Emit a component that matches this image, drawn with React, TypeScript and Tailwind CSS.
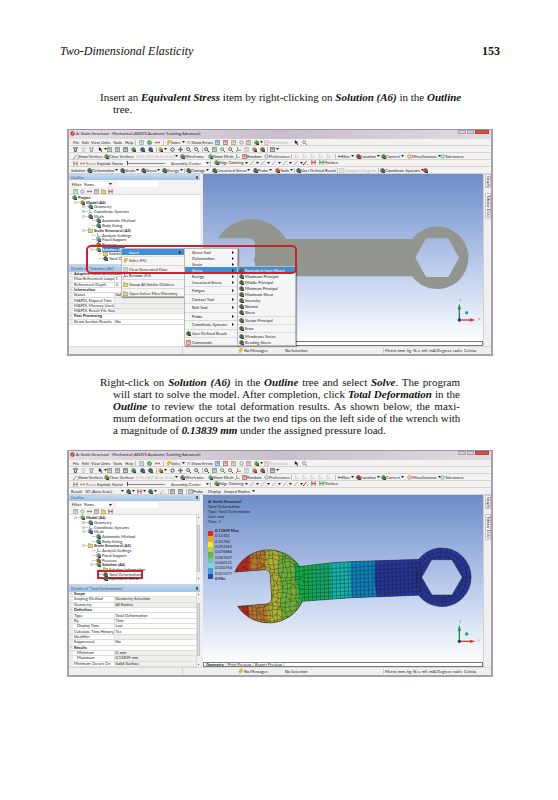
import React from "react";

type IconKind = "cube" | "page" | "check" | "bolt" | "zoom" | "move" | "funnel" | "folder" | "line" | "cursor" | "axis" | "bars" | "ring" | "size";

function Icon({ kind, c = "#3c5a46" }: { kind: IconKind; c?: string }) {
  return (
    <svg viewBox="0 0 12 12" className="size-[5px] shrink-0" aria-hidden="true">
      {kind === "cube" && (
        <>
          <path d="M1 3 6 0l5 3v6l-5 3-5-3z" fill={c} />
          <path d="M1 3l5 3 5-3M6 6v6" stroke="#fff" strokeOpacity="0.5" fill="none" />
          <path d="M6 6h6v6H6z" fill="#26333c" />
          <path d="M8 8h3" stroke="#e4c840" strokeWidth="2" />
        </>
      )}
      {kind === "page" && <path d="M1 1h10v10H1zM3 4h6M3 7h6" fill="#f4f6f6" stroke={c} strokeWidth="1.6" />}
      {kind === "check" && (
        <>
          <circle cx="6" cy="6" r="5.5" fill={c} />
          <path d="m3 6 2 2 4-5" stroke="#fff" strokeWidth="1.8" fill="none" />
        </>
      )}
      {kind === "bolt" && <path d="M6 0h5L8 5h3l-7 7 1-5H2z" fill="#f5cf17" stroke="#8b7410" strokeWidth="0.8" />}
      {kind === "zoom" && (
        <>
          <circle cx="5" cy="5" r="3.6" fill="#eef" stroke={c} strokeWidth="1.8" />
          <path d="m8 8 4 4" stroke={c} strokeWidth="2.4" />
        </>
      )}
      {kind === "move" && <path d="M6 1v10M1 6h10M4 3l2-2 2 2M4 9l2 2 2-2M3 4 1 6l2 2M9 4l2 2-2 2" stroke={c} strokeWidth="1.5" fill="none" />}
      {kind === "funnel" && <path d="M1 2h10L8 6v5H4V6z" fill="none" stroke={c} strokeWidth="1.8" />}
      {kind === "folder" && <path d="M0 2h5l1 2h6v7H0z" fill="#ecd66c" stroke="#6c8a3a" strokeWidth="1.4" />}
      {kind === "line" && <path d="M1 11 9 2M3 11H0M10 11h2" stroke={c} strokeWidth="1.5" fill="none" />}
      {kind === "cursor" && <path d="M2 0v9l3-2 3 5 2-1-3-5h3z" fill={c} />}
      {kind === "axis" && <path d="M4 0v8h8M4 8l-4 4" stroke={c} strokeWidth="1.6" fill="none" />}
      {kind === "bars" && <path d="M2 0v12M10 0v12M2 6h8M4 4 2 6l2 2M8 4l2 2-2 2" stroke={c} strokeWidth="1.7" fill="none" />}
      {kind === "ring" && <circle cx="6" cy="6" r="4" fill="none" stroke={c} strokeWidth="2" />}
      {kind === "size" && <path d="M0 6h12M3 3 0 6l3 3M9 3l3 3-3 3" stroke={c} strokeWidth="1.5" fill="none" />}
    </svg>
  );
}

type Item = { w: string; t?: string; i?: IconKind; c?: string; drop?: boolean; off?: boolean; sep?: boolean };

function Toolbar({ items, pad }: { items: Item[]; pad: string }) {
  return (
    <div className={"flex h-[7px] items-center border-b border-[#d3d3d3] bg-[#f3f2f1] " + pad}>
      {items.map((it, n) =>
        it.sep ? (
          <span key={n} className={"flex h-[5px] shrink-0 " + it.w}>
            <i className="h-full w-px bg-[#bdbdbd]" />
          </span>
        ) : it.t || it.i ? (
          <button key={n} type="button" aria-label={it.t ?? it.i} className={"flex shrink-0 items-center whitespace-nowrap text-left " + it.w + (it.off ? " text-[#b3b3b3]" : "")}>
            {it.i && <Icon kind={it.i} c={it.c} />}
            {it.t && <span>{it.t}</span>}
            {it.drop && <Caret />}
          </button>
        ) : (
          <span key={n} className={"flex shrink-0 items-center " + it.w}>
            {it.drop && <Caret />}
          </span>
        ),
      )}
    </div>
  );
}

function Caret() {
  return (
    <svg viewBox="0 0 6 4" className="ml-px h-[2px] w-[3px] shrink-0" aria-hidden="true">
      <path d="M0 0h6L3 4z" fill="#222" />
    </svg>
  );
}

const menuRow: Item[] = [
  { w: "w-[9px]", t: "File" },
  { w: "w-[9px]", t: "Edit" },
  { w: "w-[10px]", t: "View" },
  { w: "w-[12px]", t: "Units" },
  { w: "w-[12px]", t: "Tools" },
  { w: "w-[10px]", t: "Help" },
  { w: "w-[4px]", sep: true },
  { w: "w-[8px]", i: "page", c: "#73a07c" },
  { w: "w-[8px]", i: "check", c: "#2fa12d" },
  { w: "w-[8px]", i: "size", c: "#a03a52" },
  { w: "w-[3px]", sep: true },
  { w: "w-[21px]", i: "bolt", t: "Solve", drop: true },
  { w: "w-[28px]", t: "?/ Show Errors" },
  { w: "w-[8px]", i: "page", c: "#3b62a0" },
  { w: "w-[8px]", i: "page", c: "#a83b31" },
  { w: "w-[8px]", i: "page", c: "#8c8c4a" },
  { w: "w-[7px]", i: "ring", c: "#888888" },
  { w: "w-[8px]", i: "page", c: "#9c6a5b" },
  { w: "w-[10px]", i: "cube", c: "#49a454", drop: true },
  { w: "w-[30px]", i: "page", c: "#c4a9a0", t: "Worksheet", off: true },
  { w: "w-[8px]", i: "cursor", c: "#222222" },
  { w: "w-[8px]", i: "zoom", c: "#6a8a8a" },
];

const viewRow: Item[] = [
  { w: "w-[8px]", i: "funnel", c: "#222222" },
  { w: "w-[8px]", i: "funnel", c: "#b9b9b9" },
  { w: "w-[9px]", i: "funnel", c: "#777777" },
  { w: "w-[9px]", i: "cursor", c: "#222222", drop: true },
  { w: "w-[8px]", i: "page", c: "#4c6f52" },
  { w: "w-[8px]", i: "page", c: "#4c6f52" },
  { w: "w-[8px]", i: "page", c: "#444444" },
  { w: "w-[9px]", i: "cube", c: "#39a045" },
  { w: "w-[8px]", i: "cube", c: "#3a4b90" },
  { w: "w-[8px]", i: "cube", c: "#3a4b90" },
  { w: "w-[2px]", sep: true },
  { w: "w-[12px]", i: "cube", c: "#df9d34", drop: true },
  { w: "w-[8px]", i: "ring", c: "#333333" },
  { w: "w-[8px]", i: "move", c: "#333333" },
  { w: "w-[8px]", i: "zoom", c: "#444444" },
  { w: "w-[8px]", i: "zoom", c: "#444444" },
  { w: "w-[2px]", sep: true },
  { w: "w-[8px]", i: "zoom", c: "#333333" },
  { w: "w-[8px]", i: "page", c: "#467a48" },
  { w: "w-[8px]", i: "zoom", c: "#278a34" },
  { w: "w-[8px]", i: "zoom", c: "#555555" },
  { w: "w-[8px]", i: "axis", c: "#555555" },
  { w: "w-[8px]", i: "page", c: "#aaaaaa" },
  { w: "w-[8px]", i: "cube", c: "#b58d30" },
  { w: "w-[7px]", i: "cube", c: "#8f4d38" },
  { w: "w-[3px]", sep: true },
  { w: "w-[10px]", i: "page", c: "#444444", drop: true },
];

const meshRow: Item[] = [
  { w: "w-[31px]", i: "line", c: "#555555", t: "Show Vertices" },
  { w: "w-[32px]", i: "cube", c: "#74843b", t: "Close Vertices" },
  { w: "w-[38px]", t: "0.64+002 (Auto Scale)", off: true },
  { w: "w-[6px]", drop: true },
  { w: "w-[28px]", i: "cube", c: "#6a6a6a", t: "Wireframe" },
  { w: "w-[27px]", i: "cube", c: "#7a9a88", t: "Show Mesh" },
  { w: "w-[7px]", i: "axis", c: "#3d9a4c" },
  { w: "w-[22px]", i: "page", c: "#b02d25", t: "Random" },
  { w: "w-[27px]", i: "ring", c: "#6f8aa8", t: "Preferences" },
  { w: "w-[3px]", sep: true },
  { w: "w-[8px]", i: "axis", c: "#bbbbbb" },
  { w: "w-[8px]", i: "axis", c: "#bbbbbb" },
  { w: "w-[8px]", i: "axis", c: "#bbbbbb" },
  { w: "w-[8px]", i: "axis", c: "#bbbbbb" },
  { w: "w-[9px]", i: "axis", c: "#bbbbbb" },
  { w: "w-[3px]", sep: true },
  { w: "w-[18px]", i: "size", c: "#333333", t: "Size", drop: true },
  { w: "w-[25px]", i: "cube", c: "#a12632", t: "Location", drop: true },
  { w: "w-[26px]", i: "cube", c: "#2f8d3d", t: "Convert", drop: true },
  { w: "w-[33px]", i: "ring", c: "#d8574a", t: "Miscellaneous", drop: true },
  { w: "w-[26px]", i: "ring", c: "#419a71", t: "Tolerances" },
];

const edgeRow: Item[] = [
  { w: "w-[36px]", i: "cube", c: "#57a04f", t: "Edge Coloring", drop: true },
  { w: "w-[11px]", i: "line", c: "#888888", drop: true },
  { w: "w-[11px]", i: "line", c: "#888888", drop: true },
  { w: "w-[11px]", i: "line", c: "#888888", drop: true },
  { w: "w-[11px]", i: "line", c: "#888888", drop: true },
  { w: "w-[9px]", i: "line", c: "#888888", drop: true },
  { w: "w-[8px]", i: "line", c: "#000000" },
  { w: "w-[8px]", i: "bars", c: "#a02c3a" },
  { w: "w-[24px]", i: "bars", c: "#2c8a4a", t: "Thicken" },
];

const solutionRow: Item[] = [
  { w: "w-[16px]", t: "Solution" },
  { w: "w-[33px]", i: "cube", t: "Deformation", drop: true },
  { w: "w-[21px]", i: "cube", t: "Strain", drop: true },
  { w: "w-[21px]", i: "cube", t: "Stress", drop: true },
  { w: "w-[22px]", i: "cube", t: "Energy", drop: true },
  { w: "w-[2px]", sep: true },
  { w: "w-[26px]", i: "cube", t: "Damage", drop: true },
  { w: "w-[41px]", i: "cube", t: "Linearized Stress", drop: true },
  { w: "w-[22px]", i: "cube", t: "Probe", drop: true },
  { w: "w-[19px]", i: "cube", c: "#c4532c", t: "Tools", drop: true },
  { w: "w-[2px]", sep: true },
  { w: "w-[41px]", i: "cube", t: "User Defined Result" },
  { w: "w-[2px]", sep: true },
  { w: "w-[39px]", i: "page", c: "#c0c0c0", t: "Campbell Diagram", off: true },
  { w: "w-[2px]", sep: true },
  { w: "w-[43px]", i: "cube", t: "Coordinate Systems", drop: true },
  { w: "w-[6px]", i: "cube", c: "#b33030" },
];

const resultRow: Item[] = [
  { w: "w-[14px]", t: "Result" },
  { w: "w-[35px]", t: "3D (Auto Scale)" },
  { w: "w-[6px]", drop: true },
  { w: "w-[11px]", i: "cube", c: "#2f6b46", drop: true },
  { w: "w-[11px]", i: "bars", c: "#b0412f", drop: true },
  { w: "w-[12px]", i: "cube", c: "#3d6444", drop: true },
  { w: "w-[8px]", i: "line", c: "#9a6a50" },
  { w: "w-[2px]", sep: true },
  { w: "w-[8px]", i: "page", c: "#555555" },
  { w: "w-[8px]", i: "page", c: "#555555" },
  { w: "w-[2px]", sep: true },
  { w: "w-[20px]", i: "page", c: "#777777", t: "Probe" },
  { w: "w-[16px]", t: "Display" },
  { w: "w-[27px]", t: "Scoped Bodies" },
  { w: "w-[6px]", drop: true },
];

function ExplodeRow({ id }: { id: string }) {
  return (
    <div className="flex h-[7px] items-center border-b border-[#d3d3d3] bg-[#f3f2f1] pl-[4px]">
      <span className="w-[7px]">
        <Icon kind="bars" c="#7a7a7a" />
      </span>
      <button type="button" className="flex w-[17px] items-center gap-px whitespace-nowrap text-[#777]">
        <Icon kind="size" c="#b05a5a" />
        Reset
      </button>
      <label htmlFor={id + "-explode"} className="w-[30px] whitespace-nowrap">
        Explode Factor
      </label>
      <input id={id + "-explode"} type="range" defaultValue={0} className="h-px w-[38px] appearance-none bg-[#8b8b8b] [&::-webkit-slider-thumb]:h-[4px] [&::-webkit-slider-thumb]:w-px [&::-webkit-slider-thumb]:appearance-none [&::-webkit-slider-thumb]:bg-[#444]" />
      <select aria-label="Explode center" className="ml-[4px] h-[5px] w-[36px] appearance-none border-0 bg-[#f8f8f8] p-0 pl-[2px]">
        <option>Assembly Center</option>
      </select>
      <span className="w-[5px]">
        <Caret />
      </span>
      <span className="flex h-[5px] w-[4px]">
        <i className="h-full w-px bg-[#bdbdbd]" />
      </span>
      <Toolbar items={edgeRow} pad="pl-0" />
    </div>
  );
}

type Node = { pad: string; t: string; bold?: boolean; exp?: "+" | "-"; i?: IconKind; c?: string; sel?: boolean; boxed?: boolean };

const common: Node[] = [
  { pad: "pl-[5px]", t: "Model (A4)", bold: true, exp: "-", i: "cube", c: "#8d9a35" },
  { pad: "pl-[13px]", t: "Geometry", exp: "+", i: "cube", c: "#37876a" },
  { pad: "pl-[13px]", t: "Coordinate Systems", exp: "+", i: "axis", c: "#5a9d88" },
  { pad: "pl-[13px]", t: "Mesh", exp: "-", i: "cube", c: "#4a5f9a" },
  { pad: "pl-[21px]", t: "Automatic Method", i: "cube", c: "#3f7f6a" },
  { pad: "pl-[21px]", t: "Body Sizing", i: "cube", c: "#3f7f6a" },
  { pad: "pl-[13px]", t: "Static Structural (A5)", bold: true, exp: "-", i: "folder" },
  { pad: "pl-[21px]", t: "Analysis Settings", i: "axis", c: "#4d8f72" },
  { pad: "pl-[21px]", t: "Fixed Support", i: "cube", c: "#6a8fb8" },
  { pad: "pl-[21px]", t: "Pressure", i: "cube", c: "#a4533f" },
];

const treeOne: Node[] = [
  { pad: "pl-0", t: "Project", bold: true, i: "cube", c: "#3d8f52" },
  ...common,
  { pad: "pl-[21px]", t: "Solution (A6)", bold: true, exp: "-", i: "cube", c: "#6da03c", sel: true },
  { pad: "pl-[28px]", t: "Solution Information", i: "folder" },
  { pad: "pl-[28px]", t: "Total Deformation", i: "cube" },
];

const treeTwo: Node[] = [
  ...common,
  { pad: "pl-[21px]", t: "Solution (A6)", bold: true, exp: "-", i: "cube", c: "#6da03c" },
  { pad: "pl-[28px]", t: "Solution Information", i: "folder" },
  { pad: "pl-[28px]", t: "Total Deformation", i: "cube", boxed: true },
  { pad: "pl-[28px]", t: "Equivalent Stress", i: "cube" },
];

function Tree({ nodes }: { nodes: Node[] }) {
  return (
    <ul className="flex h-[66px] flex-col">
      {nodes.map((n) => (
        <li key={n.t} className={"flex min-h-0 flex-1 items-center whitespace-nowrap " + n.pad}>
          {n.t !== "Project" && (
            <span className="flex w-[6px] shrink-0 items-center">
              {n.exp ? (
                <svg viewBox="0 0 9 9" className="size-[3px]" aria-hidden="true">
                  <path d={n.exp === "+" ? "M.5.5h8v8h-8zM2 4.5h5M4.5 2v5" : "M.5.5h8v8h-8zM2 4.5h5"} fill="#fff" stroke="#777" />
                </svg>
              ) : (
                <i className="ml-[2px] h-px w-px bg-[#bbb]" />
              )}
              <i className="h-px flex-1 bg-[#d0d0d0]" />
            </span>
          )}
          <span className={"relative flex items-center gap-px " + (n.t === "Project" ? "pl-[3px]" : "")}>
            {n.i && <Icon kind={n.i} c={n.c} />}
            <span className={(n.bold ? "font-bold " : "") + (n.sel ? "bg-[#3478c8] text-white" : "")}>{n.t}</span>
            {n.boxed && <i className="absolute -top-[2px] -left-[6px] h-[9px] w-[46px] border-2 border-[#cf2230]" />}
          </span>
        </li>
      ))}
    </ul>
  );
}

type Row = [string, string?, boolean?];

const detailsOne: Row[] = [
  ["Adaptive Mesh Refinement"],
  ["Max Refinement Loops", "1."],
  ["Refinement Depth", "2."],
  ["Information"],
  ["Status", "Solve Required", true],
  ["MAPDL Elapsed Time", "", true],
  ["MAPDL Memory Used", "", true],
  ["MAPDL Result File Size", "", true],
  ["Post Processing"],
  ["Beam Section Results", "No"],
];

const detailsTwo: Row[] = [
  ["Scope"],
  ["Scoping Method", "Geometry Selection", true],
  ["Geometry", "All Bodies", true],
  ["Definition"],
  ["Type", "Total Deformation"],
  ["By", "Time"],
  ["   Display Time", "Last"],
  ["Calculate Time History", "Yes"],
  ["Identifier", "", true],
  ["Suppressed", "No"],
  ["Results"],
  ["   Minimum", "0. mm", true],
  ["   Maximum", "0.13839 mm", true],
  ["Minimum Occurs On", "Solid\\Surface", true],
];

function Details({ rows, height }: { rows: Row[]; height: string }) {
  return (
    <table className={"w-full table-fixed border-collapse bg-white " + height}>
      <colgroup>
        <col className="w-[4px]" />
        <col className="w-[41px]" />
        <col />
      </colgroup>
      <tbody>
        {rows.map(([k, v, ro]) =>
          v === undefined ? (
            <tr key={k} className="border-b border-[#dedede]">
              <td className="bg-[#ececec] p-0 text-center leading-[4px]">−</td>
              <th colSpan={2} scope="colgroup" className="p-0 pl-px text-left leading-[4px] font-bold">
                {k}
              </th>
            </tr>
          ) : (
            <tr key={k} className="border-b border-[#dedede]">
              <td className="bg-[#ececec] p-0" />
              <th scope="row" className="border-r border-[#dedede] p-0 pl-px text-left leading-[4px] font-normal whitespace-pre">
                {k}
              </th>
              <td className={"p-0 pl-px leading-[4px] whitespace-nowrap " + (ro ? "bg-[#efefec]" : "")}>{v}</td>
            </tr>
          ),
        )}
      </tbody>
    </table>
  );
}

function PanelHeader({ title, h }: { title: string; h: string }) {
  return (
    <div className={"flex items-center justify-between bg-linear-to-b from-[#c4d9ee] to-[#a4c5e6] px-[2px] text-[#405a78] " + h}>
      <span>{title}</span>
      <i className="h-[3px] w-[2px] bg-[#4b6480]" />
    </div>
  );
}

function ScrollBar() {
  return (
    <div className="flex w-[4px] flex-col items-center justify-between border-l border-[#dcdcdc] bg-[#f0f0f0] py-[2px]">
      <i className="size-px bg-[#555]" />
      <i className="h-3/4 w-[3px] border border-[#c4c4c8] bg-[#dededf]" />
      <i className="size-px bg-[#555]" />
    </div>
  );
}

function LeftPanel({ id, nodes, title, rows, height, scroll }: { id: string; nodes: Node[]; title: string; rows: Row[]; height: string; scroll?: boolean }) {
  return (
    <aside className="flex w-[131px] shrink-0 flex-col overflow-hidden bg-white">
      <PanelHeader title="Outline" h="h-[6px]" />
      <div className="flex h-[8px] items-center bg-[#f3f2f1] pl-[3px]">
        <label htmlFor={id + "-filter"} className="w-[10px]">
          Filter:
        </label>
        <select id={id + "-filter"} className="h-[5px] w-[26px] appearance-none border-0 bg-white p-0 pl-[2px]">
          <option>Name</option>
        </select>
        <Caret />
        <input aria-label="Filter text" className="ml-[5px] h-[6px] w-[41px] bg-white p-0" />
      </div>
      <div className="flex h-[7px] items-center gap-[2px] border-b border-[#dddddd] bg-[#f3f2f1] pl-[4px]">
        <Icon kind="page" c="#69a06d" />
        <Icon kind="ring" c="#7d93b4" />
        <Icon kind="size" c="#545454" />
        <Icon kind="page" c="#777777" />
        <Icon kind="folder" />
        <Icon kind="bars" c="#b04238" />
      </div>
      <div className="flex h-[69px] pb-[3px]">
        <div className="min-w-0 flex-1">
          <Tree nodes={nodes} />
        </div>
        {scroll && <ScrollBar />}
      </div>
      <PanelHeader title={title} h="h-[8px]" />
      <div className="flex">
        <div className="min-w-0 flex-1">
          <Details rows={rows} height={height} />
        </div>
        {scroll && <ScrollBar />}
      </div>
    </aside>
  );
}

function Triad({ y }: { y: number }) {
  return (
    <g>
      <path d={`M784 ${y}V${y - 34}`} stroke="#1d8a3c" strokeWidth="4" />
      <path d={`M784 ${y - 49}l-5 17h10z`} fill="#1d8a3c" />
      <path d={`M784 ${y}h34`} stroke="#d23a30" strokeWidth="4" />
      <path d={`M832 ${y}l-16-5v10z`} fill="#d23a30" />
      <circle cx="784" cy={y} r="5" fill="#223a88" />
      <circle cx="806" cy={y - 22} r="5" fill="#18a0a8" />
      <path d={`M784 ${y - 63}l3 4 3-4M787 ${y - 59}v5`} stroke="#56a06a" strokeWidth="1.5" fill="none" />
      <path d={`M840 ${y - 6}l6 7M846 ${y - 6}l-6 7`} stroke="#e08a80" strokeWidth="1.5" />
    </g>
  );
}

function GreyWrench() {
  return (
    <svg viewBox="15 12 840 501" className="absolute inset-0 size-full" aria-label="Wrench model">
      <path
        fillRule="evenodd"
        fill="#93968f"
        d="M60 205A118 118 0 0 1 264 207H642A94 94 0 1 1 642 319H264A118 118 0 0 1 60 320H150Q171 320 171 305V225Q171 205 150 205ZM652 263 684 321H751L783 263 751 205H684Z"
      />
      <path d="M170 262v14M163 270h14" stroke="#6480a8" strokeWidth="1.5" />
      <Triad y={450} />
    </svg>
  );
}

const wrenchPath =
  "M110 246A111 111 0 0 1 305 230Q400 217 455 215L662 208A88 88 0 1 1 662 316L460 323L313 334A111 111 0 0 1 119 349L203 342Q221 340 221 326L217 256Q216 239 203 239ZM671 262 702 315H762L793 262 762 209H701Z";

const bands: [string, string][] = [
  ["#c0281f", "M90 160H330V420H90Z"],
  ["#b8762c", "M158 160Q158 215 151 262V335Q150 350 162 420H330V160Z"],
  ["#b0ae34", "M202 160V280Q204 350 216 420H340V160Z"],
  ["#6fae3c", "M254 160Q238 210 240 245Q254 300 244 345Q252 375 264 420H350V160Z"],
  ["#14ab48", "M300 160Q280 250 298 290Q306 320 318 420H500V160Z"],
  ["#12a768", "M343 160V420H500V160Z"],
  ["#14b3ae", "M396 160Q398 280 406 420H560V160Z"],
  ["#0d80bd", "M458 160Q454 280 468 420H600V160Z"],
  ["#28359b", "M540 160Q518 262 542 340V420H840V160Z"],
];

// Small repeatable offset that makes the element edges irregular.
function wobble(a: number, b: number) {
  const s = Math.sin(a * 12.9898 + b * 78.233) * 43758.5453;
  return (s - Math.floor(s) - 0.5) * 11;
}

function buildMesh() {
  let d = "";
  const point = (i: number, j: number) => `${(96 + i * 13 + wobble(i, j)).toFixed(1)} ${(168 + j * 13 + wobble(j + 40, i)).toFixed(1)}`;
  for (let i = 0; i < 17; i++) {
    for (let j = 0; j < 19; j++) {
      d += `M${point(i, j)}L${point(i + 1, j)}M${point(i, j)}L${point(i, j + 1)}`;
    }
  }
  const top = (x: number) => 230 - (x - 305) * 0.062;
  const bottom = (x: number) => 334 - (x - 313) * 0.052;
  for (let x = 318; x < 668; x += 12) {
    d += `M${x} ${top(x) - 8}L${x + 2} ${bottom(x) + 8}`;
  }
  for (let r = 1; r < 9; r++) {
    const f = r / 9;
    d += `M312 ${top(312) + (bottom(312) - top(312)) * f}L668 ${top(668) + (bottom(668) - top(668)) * f}`;
  }
  for (let a = 0; a < 36; a++) {
    const t = (a * Math.PI) / 18;
    const u = t + wobble(a, 3) * 0.008;
    d += `M${731 + 48 * Math.cos(t)} ${262 + 48 * Math.sin(t)}L${731 + 90 * Math.cos(u)} ${262 + 90 * Math.sin(u)}`;
  }
  return d;
}

const mesh = buildMesh();

function MeshedWrench() {
  return (
    <svg viewBox="15 15 840 501" className="absolute inset-0 size-full" aria-label="Total deformation of the wrench">
      <clipPath id="wrench-outline">
        <path d={wrenchPath} clipRule="evenodd" />
      </clipPath>
      <g clipPath="url(#wrench-outline)">
        {bands.map(([fill, d]) => (
          <path key={fill} d={d} fill={fill} />
        ))}
        <path d={mesh} stroke="#15251c" strokeWidth="1.5" strokeOpacity="0.75" fill="none" />
        <circle cx="731" cy="262" r="75" fill="none" stroke="#15251c" strokeWidth="1.4" />
        <circle cx="731" cy="262" r="63" fill="none" stroke="#15251c" strokeWidth="1.4" />
      </g>
      <path d={wrenchPath} fill="none" stroke="#1d2a2a" strokeWidth="1.5" />
      <Triad y={454} />
    </svg>
  );
}

const legendColors = ["bg-[#e2281f]", "bg-[#f7a01b]", "bg-[#fbee08]", "bg-[#b9d232]", "bg-[#66b83d]", "bg-[#6cc6a0]", "bg-[#7ad8dc]", "bg-[#3da2dc]", "bg-[#2a46a0]"];
const legendValues = ["0.13839 Max", "0.12301", "0.10764", "0.092261", "0.076884", "0.061507", "0.046131", "0.030754", "0.015377", "0 Min"];

function Legend() {
  return (
    <div className="relative flex flex-col pt-[5px] pl-[5px]">
      <div className="flex h-[24px] flex-col justify-between leading-[4px]">
        <b>A: Static Structural</b>
        <span>Total Deformation</span>
        <span>Type: Total Deformation</span>
        <span>Unit: mm</span>
        <span>Time: 1</span>
      </div>
      <div className="mt-[5px] flex gap-[2px]">
        <div className="mt-[2px] flex h-[48px] w-[5px] flex-col">
          {legendColors.map((c) => (
            <i key={c} className={"min-h-0 flex-1 " + c} />
          ))}
        </div>
        <div className="flex h-[52px] flex-col justify-between leading-[4px]">
          {legendValues.map((v, i) => (
            <span key={v} className={i === 0 || i === 9 ? "font-bold" : ""}>
              {v}
            </span>
          ))}
        </div>
      </div>
    </div>
  );
}

type Entry = { t?: string; arrow?: boolean; hot?: boolean; i?: IconKind; c?: string };

function Menu({ place, entries }: { place: string; entries: Entry[] }) {
  return (
    <div role="menu" className={"absolute flex flex-col border border-[#b9b9b9] bg-[#f5f5f5] shadow-[1px_1px_1px_#00000055] " + place}>
      {entries.map((e, n) =>
        e.t ? (
          <button key={n} role="menuitem" type="button" className={"flex h-[6px] shrink-0 items-center whitespace-nowrap " + (e.hot ? "bg-[#3f8fd6] text-white" : "")}>
            <span className="flex w-[7px] shrink-0 justify-center">{e.i && <Icon kind={e.i} c={e.c} />}</span>
            <span className="flex-1 text-left">{e.t}</span>
            {e.arrow && (
              <svg viewBox="0 0 4 6" className="mr-[3px] h-[3px] w-[2px]" aria-hidden="true">
                <path d="M0 0v6l4-3z" fill="#111" />
              </svg>
            )}
          </button>
        ) : (
          <span key={n} className="flex min-h-0 flex-1 items-center">
            <i className="h-px w-full bg-[#dadada]" />
          </span>
        ),
      )}
    </div>
  );
}

const contextMenu: Entry[] = [
  { t: "Insert", arrow: true, hot: true },
  {},
  { t: "Solve (F5)", i: "bolt" },
  {},
  { t: "Clear Generated Data", i: "page", c: "#8a9a9a" },
  { t: "Rename (F2)", i: "axis", c: "#555555" },
  {},
  { t: "Group All Similar Children", i: "folder" },
  {},
  { t: "Open Solver Files Directory", i: "folder" },
];

const insertMenu: Entry[] = [
  { t: "Stress Tool", arrow: true },
  { t: "Deformation", arrow: true },
  { t: "Strain", arrow: true },
  { t: "Stress", arrow: true, hot: true },
  { t: "Energy", arrow: true },
  { t: "Linearized Stress", arrow: true },
  {},
  { t: "Fatigue", arrow: true },
  {},
  { t: "Contact Tool", arrow: true },
  {},
  { t: "Bolt Tool", arrow: true },
  {},
  { t: "Probe", arrow: true },
  {},
  { t: "Coordinate Systems", arrow: true },
  {},
  { t: "User Defined Result", i: "cube" },
  {},
  { t: "Commands", i: "page", c: "#c0392b" },
];

const stressMenu: Entry[] = [
  { t: "Equivalent (von-Mises)", i: "cube", hot: true },
  { t: "Maximum Principal", i: "cube" },
  { t: "Middle Principal", i: "cube" },
  { t: "Minimum Principal", i: "cube" },
  { t: "Maximum Shear", i: "cube" },
  { t: "Intensity", i: "cube" },
  { t: "Normal", i: "cube" },
  { t: "Shear", i: "cube" },
  {},
  { t: "Vector Principal", i: "cube" },
  {},
  { t: "Error", i: "cube" },
  {},
  { t: "Membrane Stress", i: "cube" },
  { t: "Bending Stress", i: "cube" },
];

type WindowProps = {
  id: string;
  lastRow: Item[];
  panel: React.ReactNode;
  view: React.ReactNode;
  tabs?: boolean;
  children?: React.ReactNode;
};

function MechanicalWindow({ id, lastRow, panel, view, tabs, children }: WindowProps) {
  return (
    <section className="relative mr-[65px] ml-[67px] border-x-2 border-b-2 border-[#a59fae] bg-[#f0efef] font-['Lato','Liberation_Sans',sans-serif] text-[4px] leading-[5px] text-[#1c1c1c]">
      <header className="flex h-[10px] items-start justify-between border-t border-[#9a929f] bg-linear-to-r from-[#e6dfe6] via-[#c9bfcc] to-[#e0dae2]">
        <div className="flex items-center gap-px pt-px pl-px">
          <Icon kind="check" c="#c42b32" />
          <span>A: Static Structural - Mechanical [ANSYS Academic Teaching Advanced]</span>
        </div>
        <div className="flex h-[4px] gap-px pr-[2px]">
          <button type="button" aria-label="Minimize" className="w-[8px] border border-[#a8a2ac] bg-[#d5ced8]" />
          <button type="button" aria-label="Maximize" className="w-[7px] border border-[#a8a2ac] bg-[#d5ced8]" />
          <button type="button" aria-label="Close" className="w-[14px] border border-[#b5473a] bg-[#d9523f]" />
        </div>
      </header>
      <Toolbar items={menuRow} pad="pl-[4px]" />
      <Toolbar items={viewRow} pad="pl-[4px]" />
      <Toolbar items={meshRow} pad="pl-[4px]" />
      <ExplodeRow id={id} />
      <Toolbar items={lastRow} pad="pl-[2px]" />
      <div className="flex h-[172px]">
        {panel}
        <main className="ml-[3px] flex min-w-0 flex-1 flex-col">
          <div className="relative h-[167px] bg-linear-to-b from-[#6f8cc8] via-[#b3c5e8] to-[#fdfeff]">{view}</div>
          <div className="flex h-[5px] items-center border border-[#777] bg-white leading-[3px] whitespace-nowrap">
            {tabs && <span className="pl-[2px]"><b>Geometry</b> / Print Preview / Report Preview /</span>}
          </div>
        </main>
        <nav className="flex w-[8px] flex-col gap-[5px] border-l border-[#d0d0d0] pl-px">
          <button type="button" className="h-[14px] w-[6px] border border-[#c4c4c4] bg-[#fafafa] leading-[4px] [writing-mode:vertical-rl]">Graph</button>
          <button type="button" className="h-[26px] w-[6px] border border-[#c4c4c4] bg-[#fafafa] leading-[4px] whitespace-nowrap [writing-mode:vertical-rl]">Tabular Data</button>
        </nav>
      </div>
      <footer className="flex h-[8px] items-center border-t border-[#d8d8d8] whitespace-nowrap">
        <span className="h-full w-[114px] border-r border-[#d0d0d0]" />
        <span className="flex w-[102px] items-center gap-px pl-[55px]">
          <Icon kind="bolt" />
          No Messages
        </span>
        <span className="flex-1">No Selection</span>
        <span className="w-[54px] border-l border-[#c8c8c8] pl-px">Metric (mm, kg, N, s, mV, mA)</span>
        <span className="w-[16px]">Degrees</span>
        <span className="w-[11px]">rad/s</span>
        <span className="w-[27px]">Celsius</span>
      </footer>
      {children}
    </section>
  );
}

export default function App() {
  return (
    <div className="min-h-screen bg-white pt-[45px] pb-[123px] font-['Palatino_Linotype','Palatino','Liberation_Serif',serif] text-[11px] leading-[12px] text-[#111]">
      <header className="flex justify-between pr-[58px] pl-[60px] text-[12px]">
        <h1 className="italic">Two-Dimensional Elasticity</h1>
        <span className="font-bold">153</span>
      </header>
      <p className="mt-[34px] mr-[98px] ml-[113px]">
        <span className="-ml-[13px] block whitespace-nowrap [text-align-last:justify]">
          Insert an <b><i>Equivalent Stress</i></b> item by right-clicking on <b><i>Solution (A6)</i></b> in the <b><i>Outline</i></b>
        </span>
        tree.
      </p>
      <div className="mt-[14px]">
        <MechanicalWindow
          id="setup"
          lastRow={solutionRow}
          panel={<LeftPanel id="setup" nodes={treeOne} title={'Details of "Solution (A6)"'} rows={detailsOne} height="h-[53px]" />}
          view={<GreyWrench />}
        >
          <Menu place="top-[119px] left-[52px] h-[49px] w-[64px]" entries={contextMenu} />
          <Menu place="top-[119px] left-[115px] h-[98px] w-[54px]" entries={insertMenu} />
          <Menu place="top-[137px] left-[168px] h-[80px] w-[59px]" entries={stressMenu} />
          <i className="pointer-events-none absolute top-[116px] left-[17px] h-[29px] w-[211px] rounded-[5px] border-2 border-[#cc2229]" />
        </MechanicalWindow>
      </div>
      <p className="mt-[20px] mr-[98px] ml-[113px] whitespace-nowrap">
        <span className="-ml-[13px] block [text-align-last:justify]">
          Right-click on <b><i>Solution (A6)</i></b> in the <b><i>Outline</i></b> tree and select <b><i>Solve</i></b>. The program
        </span>
        <span className="block [text-align-last:justify]">
          will start to solve the model. After completion, click <b><i>Total Deformation</i></b> in the
        </span>
        <span className="block [text-align-last:justify]">
          <b><i>Outline</i></b> to review the total deformation results. As shown below, the maxi-
        </span>
        <span className="block [text-align-last:justify]">
          mum deformation occurs at the two end tips on the left side of the wrench with
        </span>
        <span className="block">
          a magnitude of <b><i>0.13839 mm</i></b> under the assigned pressure load.
        </span>
      </p>
      <div className="mt-[14px]">
        <MechanicalWindow
          id="result"
          lastRow={resultRow}
          tabs
          panel={<LeftPanel id="result" nodes={treeTwo} title={'Details of "Total Deformation"'} rows={detailsTwo} height="h-[75px]" scroll />}
          view={
            <>
              <MeshedWrench />
              <Legend />
            </>
          }
        />
      </div>
    </div>
  );
}
